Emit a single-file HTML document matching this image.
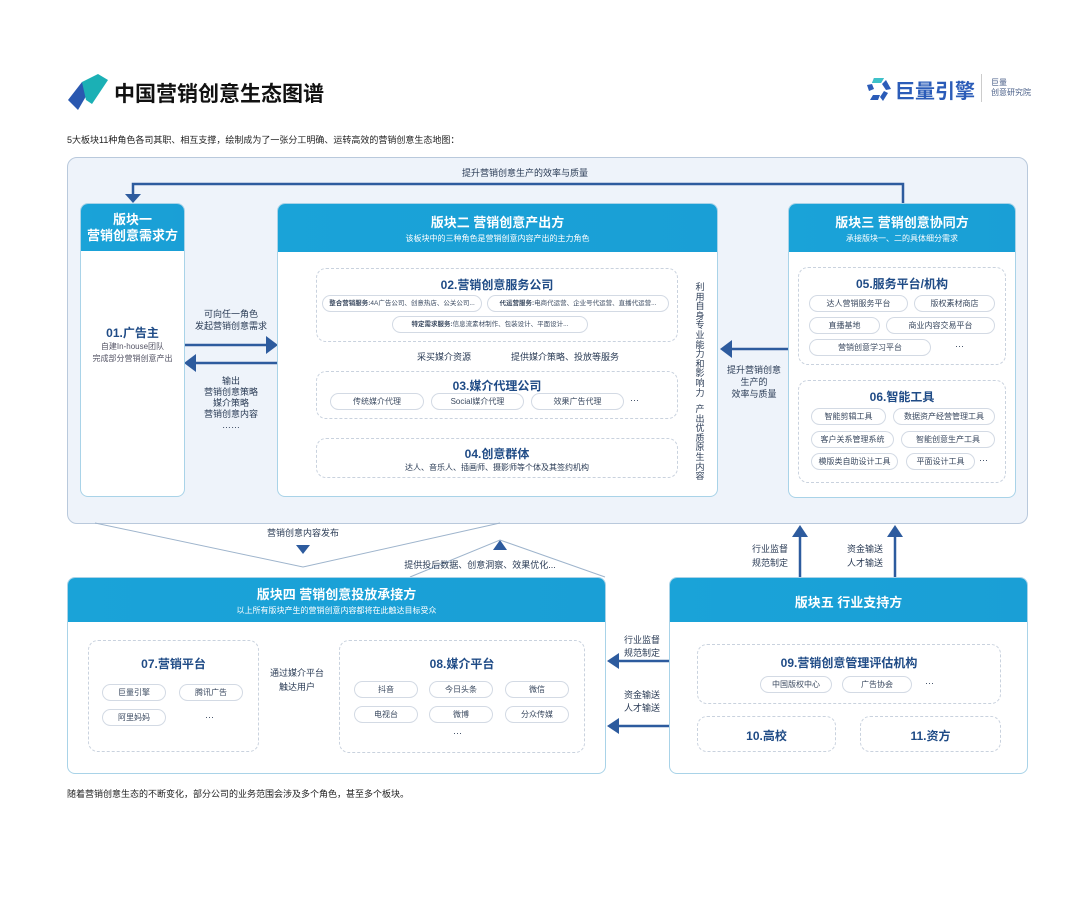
<!DOCTYPE html><html><head><meta charset="utf-8"><style>
*{margin:0;padding:0;box-sizing:border-box}
body{width:1080px;height:898px;background:#fff;position:relative;overflow:hidden;font-family:"Liberation Sans","Noto Sans CJK SC",sans-serif;color:#2a3b55}
.a{position:absolute}
.blk{position:absolute;background:#fff;border:1px solid #a9d3e8;border-radius:8px;overflow:hidden}
.hd{background:linear-gradient(90deg,#1aa3d8,#1a9fd6);color:#fff;text-align:center;font-weight:bold}
.box{position:absolute;border:1px dashed #c9d2de;border-radius:10px;background:#fff;text-align:center}
.tt{color:#1f4b86;font-weight:bold;font-size:12px}
.pill{position:absolute;border:1px solid #d3dae4;border-radius:10px;font-size:8px;color:#3b4a60;text-align:center;line-height:15px;height:17px;background:#fff;white-space:nowrap;overflow:hidden}
.sm{font-size:6.5px}
.s{font-size:9px;color:#2a3b55;text-align:center;line-height:12px}
</style></head><body>
<svg class="a" style="left:68px;top:74px" width="42" height="36" viewBox="0 0 42 36"><polygon points="0,26 14,8 24,12 10,36" fill="#2a58b0"/><polygon points="14,8 30,0 40,6 24,30 18,26" fill="#1bb0b5"/></svg>
<div class="a" style="left:114px;top:78px;font-size:21px;font-weight:bold;color:#111">中国营销创意生态图谱</div>
<svg class="a" style="left:866px;top:74px" width="28" height="28" viewBox="0 0 28 28"><path d="M8 4h10l-3 5H6zM20 6l5 9-5 1-4-6zM22 19l-5 8-3-4 4-6zM12 26H4l3-5h7zM3 17l-2-6 5-1 2 5z" fill="#2b5cb8"/><path d="M8 4h10l-3 5H6z" fill="#3ec2c9"/></svg>
<div class="a" style="left:895px;top:75px;font-size:20px;color:#2b5cb8;font-weight:bold">巨量引擎</div>
<div class="a" style="left:981px;top:74px;width:1px;height:28px;background:#ccc"></div>
<div class="a" style="left:991px;top:78px;font-size:8px;color:#4a5f88;line-height:10px">巨量<br>创意研究院</div>
<div class="a" style="left:67px;top:133px;font-size:9px;color:#222">5大板块11种角色各司其职、相互支撑，绘制成为了一张分工明确、运转高效的营销创意生态地图：</div>

<div class="a" style="left:67px;top:157px;width:961px;height:367px;background:#eef3fa;border:1px solid #b9c9dc;border-radius:10px"></div>
<div class="a s" style="left:380px;top:167px;width:290px">提升营销创意生产的效率与质量</div>

<svg class="a" style="left:0;top:0" width="1080" height="898">
<g fill="none" stroke="#2d5b9e" stroke-width="2.5"><path d="M903 203V184H133V195"/><path d="M184 345H268"/><path d="M286 363H194"/><path d="M788 349H730"/><path d="M800 577V535"/><path d="M895 577V535"/><path d="M669 661H617"/><path d="M669 726H617"/></g>
<g fill="#2d5b9e"><path d="M125 194h16l-8 9z"/><path d="M266 336l12 9-12 9z"/><path d="M196 354l-12 9 12 9z"/><path d="M732 340l-12 9 12 9z"/><path d="M792 537l8-12 8 12z"/><path d="M887 537l8-12 8 12z"/><path d="M619 653l-12 8 12 8z"/><path d="M619 718l-12 8 12 8z"/><path d="M296 545h14l-7 9z"/><path d="M493 550l7-10 7 10z"/></g>
<g fill="none" stroke="#9eb4cc" stroke-width="1"><path d="M95 523L303 567L500 523"/><path d="M410 577L500 540L605 577"/></g>
<g fill="none" stroke="#8aa0c0" stroke-width="1" stroke-dasharray="3,2"><path d="M315 304H302V458H312"/><path d="M677 304H688V458H677"/><path d="M484 343V370"/><path d="M495 343V370"/><path d="M262 701H332"/></g>
<g fill="#8aa0c0"><path d="M308 454l7 4-7 4z"/><path d="M683 300l-7 4 7 4z"/><path d="M480 366h8l-4 5z"/><path d="M491 348h8l-4-5z"/><path d="M331 697l7 4-7 4z"/></g>
</svg>

<div class="blk" style="left:80px;top:203px;width:105px;height:294px"><div class="hd" style="height:47px;padding-top:8px;font-size:13px;line-height:16px">版块一<br>营销创意需求方</div>
<div class="tt" style="text-align:center;margin-top:73px">01.广告主</div><div class="s" style="font-size:8px;color:#556">自建In-house团队<br>完成部分营销创意产出</div></div>
<div class="a s" style="left:185px;top:308px;width:92px">可向任一角色<br>发起营销创意需求</div>
<div class="a s" style="left:185px;top:376px;width:92px;line-height:11px">输出<br>营销创意策略<br>媒介策略<br>营销创意内容<br>……</div>
<div class="a s" style="left:285px;top:352px;width:12px;line-height:10px">采买原生内容</div>

<div class="blk" style="left:277px;top:203px;width:441px;height:294px"><div class="hd" style="height:48px;padding-top:11px;font-size:13px;line-height:16px">版块二 营销创意产出方<div style="font-size:8px;font-weight:normal">该板块中的三种角色是营销创意内容产出的主力角色</div></div></div>
<div class="box" style="left:316px;top:268px;width:362px;height:74px"><div class="tt" style="margin-top:7px">02.营销创意服务公司</div></div>
<div class="pill sm" style="left:322px;top:295px;width:160px"><b>整合营销服务:</b>4A广告公司、创意热店、公关公司...</div>
<div class="pill sm" style="left:487px;top:295px;width:182px"><b>代运营服务:</b>电商代运营、企业号代运营、直播代运营...</div>
<div class="pill sm" style="left:392px;top:316px;width:196px"><b>特定需求服务:</b>信息流素材制作、包装设计、平面设计...</div>
<div class="a s" style="left:408px;top:351px;width:72px">采买媒介资源</div>
<div class="a s" style="left:505px;top:351px;width:120px">提供媒介策略、投放等服务</div>
<div class="box" style="left:316px;top:371px;width:362px;height:48px"><div class="tt" style="margin-top:5px">03.媒介代理公司</div></div>
<div class="pill" style="left:330px;top:393px;width:94px">传统媒介代理</div>
<div class="pill" style="left:431px;top:393px;width:93px">Social媒介代理</div>
<div class="pill" style="left:531px;top:393px;width:93px">效果广告代理</div>
<div class="a s" style="left:630px;top:394px">···</div>
<div class="box" style="left:316px;top:438px;width:362px;height:40px"><div class="tt" style="margin-top:6px">04.创意群体</div><div class="s" style="font-size:8px">达人、音乐人、插画师、摄影师等个体及其签约机构</div></div>
<div class="a s" style="left:694px;top:283px;width:12px;line-height:9.6px">利用自身专业能力和影响力</div>
<div class="a s" style="left:694px;top:405px;width:12px;line-height:9.6px">产出优质原生内容</div>
<div class="a s" style="left:720px;top:364px;width:68px">提升营销创意<br>生产的<br>效率与质量</div>

<div class="blk" style="left:788px;top:203px;width:228px;height:295px"><div class="hd" style="height:48px;padding-top:11px;font-size:13px;line-height:16px">版块三 营销创意协同方<div style="font-size:8px;font-weight:normal">承接版块一、二的具体细分需求</div></div></div>
<div class="box" style="left:798px;top:267px;width:208px;height:98px"><div class="tt" style="margin-top:7px">05.服务平台/机构</div></div>
<div class="pill" style="left:809px;top:295px;width:99px">达人营销服务平台</div>
<div class="pill" style="left:914px;top:295px;width:81px">版权素材商店</div>
<div class="pill" style="left:809px;top:317px;width:71px">直播基地</div>
<div class="pill" style="left:886px;top:317px;width:109px">商业内容交易平台</div>
<div class="pill" style="left:809px;top:339px;width:122px">营销创意学习平台</div>
<div class="a s" style="left:955px;top:340px">···</div>
<div class="box" style="left:798px;top:380px;width:208px;height:103px"><div class="tt" style="margin-top:7px">06.智能工具</div></div>
<div class="pill" style="left:811px;top:408px;width:75px">智能剪辑工具</div>
<div class="pill" style="left:893px;top:408px;width:102px">数据资产经营管理工具</div>
<div class="pill" style="left:811px;top:431px;width:83px">客户关系管理系统</div>
<div class="pill" style="left:901px;top:431px;width:94px">智能创意生产工具</div>
<div class="pill" style="left:811px;top:453px;width:87px">模版类自助设计工具</div>
<div class="pill" style="left:906px;top:453px;width:69px">平面设计工具</div>
<div class="a s" style="left:979px;top:454px">···</div>

<div class="a s" style="left:240px;top:527px;width:126px">营销创意内容发布</div>
<div class="a s" style="left:400px;top:559px;width:160px">提供投后数据、创意洞察、效果优化...</div>
<div class="a s" style="left:740px;top:542px;width:60px;line-height:14px">行业监督<br>规范制定</div>
<div class="a s" style="left:835px;top:542px;width:60px;line-height:14px">资金输送<br>人才输送</div>

<div class="blk" style="left:67px;top:577px;width:539px;height:197px"><div class="hd" style="height:44px;padding-top:9px;font-size:13px;line-height:16px">版块四 营销创意投放承接方<div style="font-size:8px;font-weight:normal">以上所有版块产生的营销创意内容都将在此触达目标受众</div></div></div>
<div class="box" style="left:88px;top:640px;width:171px;height:112px"><div class="tt" style="margin-top:14px">07.营销平台</div></div>
<div class="pill" style="left:102px;top:684px;width:64px">巨量引擎</div>
<div class="pill" style="left:179px;top:684px;width:64px">腾讯广告</div>
<div class="pill" style="left:102px;top:709px;width:64px">阿里妈妈</div>
<div class="a s" style="left:205px;top:711px">···</div>
<div class="a s" style="left:262px;top:666px;width:70px;line-height:14px">通过媒介平台<br>触达用户</div>
<div class="box" style="left:339px;top:640px;width:246px;height:113px"><div class="tt" style="margin-top:14px">08.媒介平台</div></div>
<div class="pill" style="left:354px;top:681px;width:64px">抖音</div>
<div class="pill" style="left:429px;top:681px;width:64px">今日头条</div>
<div class="pill" style="left:505px;top:681px;width:64px">微信</div>
<div class="pill" style="left:354px;top:706px;width:64px">电视台</div>
<div class="pill" style="left:429px;top:706px;width:64px">微博</div>
<div class="pill" style="left:505px;top:706px;width:64px">分众传媒</div>
<div class="a s" style="left:453px;top:727px">···</div>

<div class="a s" style="left:614px;top:634px;width:56px;line-height:13px">行业监督<br>规范制定</div>
<div class="a s" style="left:614px;top:689px;width:56px;line-height:13px">资金输送<br>人才输送</div>

<div class="blk" style="left:669px;top:577px;width:359px;height:197px"><div class="hd" style="height:44px;padding-top:14px;font-size:13px">版块五 行业支持方</div></div>
<div class="box" style="left:697px;top:644px;width:304px;height:60px"><div class="tt" style="margin-top:9px">09.营销创意管理评估机构</div></div>
<div class="pill" style="left:760px;top:676px;width:72px">中国版权中心</div>
<div class="pill" style="left:842px;top:676px;width:70px">广告协会</div>
<div class="a s" style="left:925px;top:677px">···</div>
<div class="box" style="left:697px;top:716px;width:139px;height:36px"><div class="tt" style="margin-top:10px">10.高校</div></div>
<div class="box" style="left:860px;top:716px;width:141px;height:36px"><div class="tt" style="margin-top:10px">11.资方</div></div>

<div class="a" style="left:67px;top:787px;font-size:9px;color:#222">随着营销创意生态的不断变化，部分公司的业务范围会涉及多个角色，甚至多个板块。</div>
</body></html>
